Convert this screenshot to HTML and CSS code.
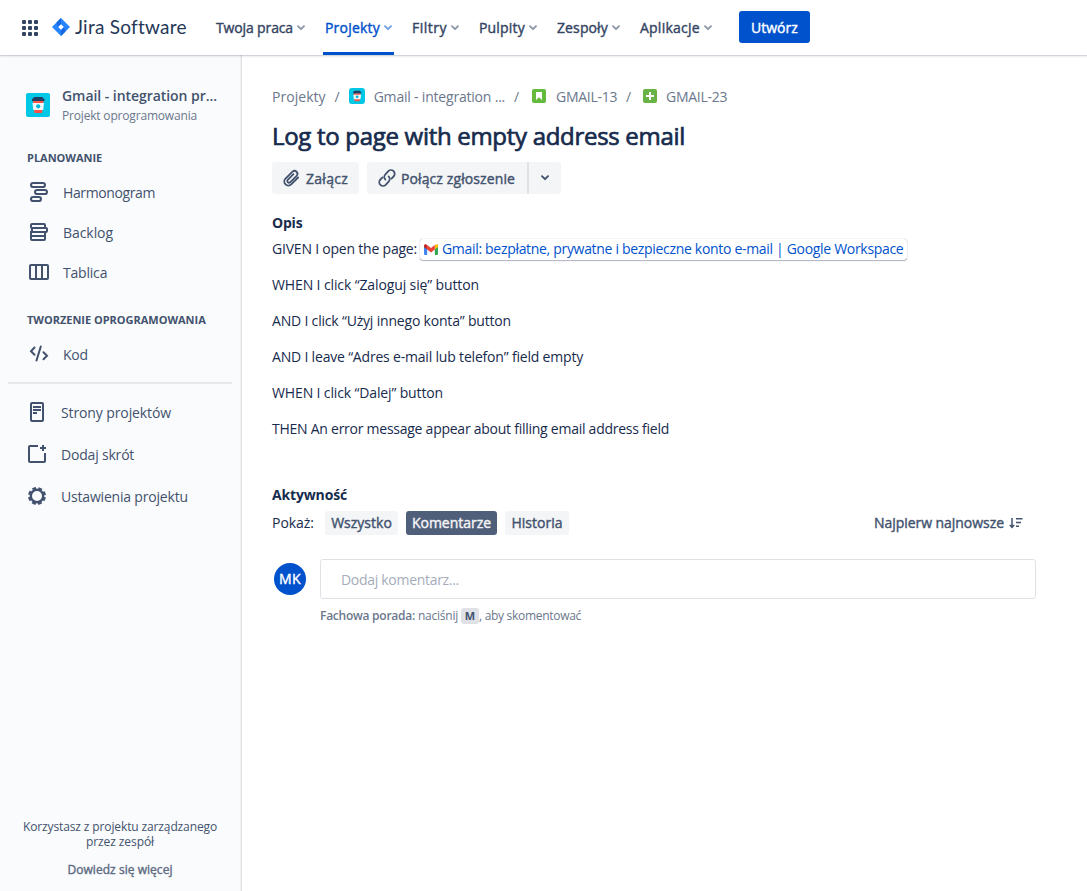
FILE: index.html
```
<!DOCTYPE html>
<html lang="pl">
<head>
<meta charset="utf-8">
<title>GMAIL-23 - Jira</title>
<link rel="stylesheet" href="styles.css">
</head>
<body>
<svg width="0" height="0" class="defs">
  <symbol id="chev" viewBox="0 0 8 6"><path d="M1 1.2 4 4.2 7 1.2" fill="none" stroke="currentColor" stroke-width="1.9" stroke-linecap="round" stroke-linejoin="round"/></symbol>
  <symbol id="cup" viewBox="0 0 24 24">
    <rect width="24" height="24" fill="#00c7e5"/>
    <path d="M7 8h10.500l-1.500 12H8.500z" fill="#ff5343"/>
    <path d="M6.500 10h11.500l-.8 7H7.300z" fill="#f4f7fa"/>
    <rect x="6" y="5.500" width="12.500" height="2.500" rx=".5" fill="#1d3f66"/>
    <rect x="7.500" y="4" width="9.500" height="2" rx=".8" fill="#1d3f66"/>
    <circle cx="12.200" cy="13.300" r="2.100" fill="#00b8d9"/>
  </symbol>
</svg>

<header class="top">
  <svg class="apps" width="16" height="16" viewBox="0 0 16 16" fill="#344563"><rect width="4" height="4" rx="1"/><rect x="6" width="4" height="4" rx="1"/><rect x="12" width="4" height="4" rx="1"/><rect y="6" width="4" height="4" rx="1"/><rect x="6" y="6" width="4" height="4" rx="1"/><rect x="12" y="6" width="4" height="4" rx="1"/><rect y="12" width="4" height="4" rx="1"/><rect x="6" y="12" width="4" height="4" rx="1"/><rect x="12" y="12" width="4" height="4" rx="1"/></svg>
  <a class="logo">
    <svg width="18" height="18" viewBox="0 0 18 18"><path d="M9 0 18 9 9 18 0 9z" fill="#2684ff"/><path d="M9 0v6L6 9 4.500 4.500z" fill="#1668e3"/><path d="M9 18v-6l3-3 1.500 4.500z" fill="#1668e3"/><path d="M9 6.200 11.800 9 9 11.800 6.200 9z" fill="#fff"/></svg>
    <span>Jira Software</span>
  </a>
  <nav class="menu">
    <a class="menu-item"><span class="ls-a">Twoja praca</span><svg class="chev"><use href="#chev"/></svg></a>
    <a class="menu-item active"><span class="ls-b">Projekty</span><svg class="chev"><use href="#chev"/></svg></a>
    <a class="menu-item"><span class="ls-c">Filtry</span><svg class="chev"><use href="#chev"/></svg></a>
    <a class="menu-item"><span class="ls-b">Pulpity</span><svg class="chev"><use href="#chev"/></svg></a>
    <a class="menu-item"><span class="ls-d">Zespoły</span><svg class="chev"><use href="#chev"/></svg></a>
    <a class="menu-item"><span class="ls-e">Aplikacje</span><svg class="chev"><use href="#chev"/></svg></a>
  </nav>
  <button class="create">Utwórz</button>
</header>

<div class="body">
  <aside class="side">
    <div class="project">
      <svg class="avatar" width="24" height="24"><use href="#cup"/></svg>
      <div><div class="pname">Gmail - integration pr...</div><div class="ptype">Projekt oprogramowania</div></div>
    </div>
    <h3 class="group">PLANOWANIE</h3>
    <a class="link"><svg width="24" height="24" viewBox="0 0 24 24"><g class="ln"><rect x="4" y="2.900" width="14" height="4.200" rx="2.100"/><rect x="8" y="9.900" width="12" height="4.200" rx="2.100"/><rect x="4" y="16.900" width="10" height="4.200" rx="2.100"/></g></svg><span class="ls-harm">Harmonogram</span></a>
    <a class="link"><svg width="24" height="24" viewBox="0 0 24 24"><g class="ln"><rect x="4" y="4" width="14" height="4" rx="1"/><rect x="4" y="12" width="14" height="4"/><rect x="4" y="16" width="14" height="4" rx="1"/></g><rect x="5" y="8" width="15" height="4" rx="1" class="ln fill-bg"/></svg><span class="ls-back">Backlog</span></a>
    <a class="link"><svg width="24" height="24" viewBox="0 0 24 24"><g class="ln"><rect x="3" y="5" width="18" height="14" rx="1"/><path d="M9 5v14M15 5v14"/></g></svg><span class="ls-tab">Tablica</span></a>
    <h3 class="group second">TWORZENIE OPROGRAMOWANIA</h3>
    <a class="link code"><svg width="24" height="24" viewBox="0 0 24 24"><g class="ln" stroke-linecap="round"><path d="M7.500 5.500 4 9.200 7.500 12.800M13.800 4.500 9.500 18.500M16.500 10.200 20 13.700 16.500 17.200"/></g></svg><span class="ls-tab">Kod</span></a>
    <hr>
    <a class="link low"><svg width="24" height="24" viewBox="0 0 24 24"><g class="ln"><rect x="6" y="3" width="12" height="18" rx="1"/><path d="M8 7h8M8 10h8M8 13h4" stroke-width="1.800"/></g></svg><span class="ls-f">Strony projektów</span></a>
    <a class="link low"><svg width="24" height="24" viewBox="0 0 24 24"><g class="ln"><path d="M13 4H5a1 1 0 0 0-1 1v14a1 1 0 0 0 1 1h14a1 1 0 0 0 1-1v-8"/><path d="M18 3v6M15 6h6"/></g></svg><span class="ls-g">Dodaj skrót</span></a>
    <a class="link low"><svg width="24" height="24" viewBox="0 0 24 24"><g class="ln"><circle cx="12" cy="12" r="6.200" stroke-width="2.400"/><circle cx="12" cy="12" r="7.800" stroke-width="2.400" stroke-dasharray="3.700 2.426" stroke-dashoffset="-1.213"/></g></svg><span class="ls-g">Ustawienia projektu</span></a>
    <footer class="note">
      <p><span class="ls-n">Korzystasz z projektu zarządzanego</span><br><span class="ls-n2">przez zespół</span></p>
      <a>Dowiedz się więcej</a>
    </footer>
  </aside>

  <main class="main">
    <div class="crumbs">
      <a class="ls-cr">Projekty</a><i>/</i>
      <svg class="mini" width="16" height="16"><use href="#cup"/></svg><a class="ls-tw">Gmail - integration ...</a><i>/</i>
      <svg class="kind" width="14" height="14"><rect width="14" height="14" rx="2" fill="#63ba3c"/><path d="M4 3h6v8L7 8.300 4 11z" fill="#fff"/></svg><a class="ls-key">GMAIL-13</a><i>/</i>
      <svg class="kind sub" width="14" height="14"><rect width="14" height="14" rx="2" fill="#68b346"/><path d="M7 3v8M3 7h8" stroke="#fff" stroke-width="2"/></svg><a class="ls-key">GMAIL-23</a>
    </div>
    <h1>Log to page with empty address email</h1>
    <div class="actions">
      <button class="btn attach"><svg width="20" height="20" viewBox="0 0 20 20"><path d="M16.600 9.300 9.700 16.200a4 4 0 0 1-5.700-5.700l7-7a2.900 2.900 0 0 1 4.100 4.100L8.600 14.100a1.700 1.700 0 0 1-2.400-2.400l5.700-5.700" transform="translate(.5 .2)" class="ic"/></svg><span class="ls-at">Załącz</span></button>
      <div class="split">
        <button class="btn join"><svg width="20" height="20" viewBox="0 0 20 20"><path class="ic" d="M8.400 11.600a3.700 3.700 0 0 1 0-5.200L11.300 3.200a3.700 3.700 0 0 1 5.300 5.300L14.500 10.600M11.600 8.400a3.700 3.700 0 0 1 0 5.200L8.700 16.800a3.700 3.700 0 0 1-5.300-5.300L5.500 9.400"/></svg><span class="ls-jn">Połącz zgłoszenie</span></button>
        <button class="btn more"><svg class="chev"><use href="#chev"/></svg></button>
      </div>
    </div>
    <h2>Opis</h2>
    <div class="desc">
      <p><span class="ls-p1">GIVEN I open the page:</span><a class="card"><svg width="14" height="11" viewBox="0 0 14 11"><path d="M0 1.500v8.500a1 1 0 0 0 1 1h2.200V4z" fill="#4285f4"/><path d="M14 1.500v8.500a1 1 0 0 1-1 1h-2.200V4z" fill="#34a853"/><path d="M10.800 1 14 0v3l-3.200 2.600z" fill="#fbbc04"/><path d="M3.200 1 7 4 10.800 1v4.600L7 8.500 3.200 5.600z" fill="#ea4335"/><path d="M0 2C0 .2 1.500-.3 3.200 1v4.600L0 3z" fill="#c5221f"/></svg><span>Gmail: bezpłatne, prywatne i bezpieczne konto e-mail | Google Workspace</span></a></p>
      <p class="ls-p2">WHEN I click “Zaloguj się” button</p>
      <p class="ls-p3">AND I click “Użyj innego konta” button</p>
      <p class="ls-p3">AND I leave “Adres e-mail lub telefon” field empty</p>
      <p class="ls-p4">WHEN I click “Dalej” button</p>
      <p class="ls-p5">THEN An error message appear about filling email address field</p>
    </div>
    <h2 class="activity">Aktywność</h2>
    <div class="filters">
      <span class="show">Pokaż:</span>
      <button class="tab t1">Wszystko</button><button class="tab t2 on">Komentarze</button><button class="tab t3">Historia</button>
      <a class="sort"><span>Najpierw najnowsze</span><svg width="14" height="12" viewBox="0 0 14 12"><path d="M3 1v9M.8 8 3 10.300 5.200 8" fill="none" stroke="currentColor" stroke-width="1.500"/><path d="M7 1.700h6.500M7 5.500h5M7 9.300h3" stroke="currentColor" stroke-width="1.600"/></svg></a>
    </div>
    <div class="comment">
      <div class="user">MK</div>
      <div class="entry">
        <div class="box">Dodaj komentarz...</div>
        <div class="tip"><b>Fachowa porada:</b><span class="press">naciśnij</span><kbd>M</kbd><span class="rest">, aby skomentować</span></div>
      </div>
    </div>
  </main>
</div>
</body>
</html>
```
FILE: styles.css
```
* { box-sizing: border-box; }
body { margin: 0; height: 891px; display: flex; flex-direction: column; overflow: hidden; font: 14px/20px "Open Sans", "Noto Sans", sans-serif; color: #172b4d; background: #fff; white-space: nowrap; }
.defs { position: absolute; }
h1, h2, h3, p { margin: 0; }
svg { flex: none; display: block; }
button { border: 0; margin: 0; padding: 0; font: inherit; color: inherit; }

/* medium weight */
.menu-item span, .create, .note a, .actions span, .tab, .sort span, .user { -webkit-text-stroke: .4px currentColor; }

.top { height: 55px; flex: none; display: flex; align-items: center; padding-left: 22px; position: relative; z-index: 1; box-shadow: 0 1px 1px rgba(9,30,66,.14), 0 2px 3px rgba(9,30,66,.06); background: #fff; }
.logo { display: flex; align-items: center; gap: 5px; width: 162px; margin-left: 14px; margin-top: -2px; font: 19px/24px Lato, sans-serif; letter-spacing: .25px; color: #253858; }
.menu { display: flex; gap: 16px; height: 55px; }
.menu-item { display: flex; align-items: center; gap: 4px; padding: 0 2px; color: #344563; border-bottom: 3px solid transparent; border-top: 3px solid transparent; }
.menu-item .chev { opacity: .55; }
.menu-item.active { color: #0052cc; border-bottom-color: #0052cc; }
.chev { width: 8px; height: 6px; }
.create { width: 71px; height: 32px; margin: -1px 0 0 25px; padding-top: 1px; border-radius: 3px; background: #0052cc; color: #fff; letter-spacing: .04px; }

.body { flex: 1; display: flex; min-height: 0; }
.side { width: 242px; display: flex; flex-direction: column; background: #fafbfc; border-right: 1px solid #dfe1e5; box-shadow: inset -1px 0 #f1f2f4; color: #42526e; }
.project { display: flex; gap: 12px; padding: 31px 0 0 26px; height: 93px; }
.avatar { border-radius: 2px; margin-top: 7px; }
.pname { font-weight: 600; letter-spacing: -.053px; line-height: 20px; }
.ptype { font-size: 12px; line-height: 20px; letter-spacing: -.18px; color: #6b778c; }
.group { font-size: 11px; line-height: 20px; font-weight: 700; padding-left: 27px; letter-spacing: -.02px; height: 25px; }
.second { margin-top: 17px; }
.link { display: flex; align-items: center; height: 40px; padding-left: 27px; gap: 12px; }
.link svg { margin-top: -2px; }
.code { height: 39px; }
hr { width: 224px; height: 2px; border: 0; background: #e6e8eb; margin: 8px 0 8px 8px; }
.low { height: 42px; padding-left: 25px; }
.ln { fill: none; stroke: #42526e; stroke-width: 2; }
.fill-bg { fill: #fafbfc; }
.note { margin: auto 0 14px; padding-right: 1px; text-align: center; font-size: 12px; line-height: 15px; }
.note a { display: block; margin-top: 13px; line-height: 15px; letter-spacing: .04px; color: #5e6c84; }

.main { flex: 1; padding: 32px 51px 0 30px; }
.crumbs { display: flex; align-items: center; height: 20px; color: #6b778c; }
.crumbs i { font-style: normal; width: 23px; text-align: center; }
.mini { border-radius: 3px; margin-right: 9px; margin-top: -2px; }
.kind { margin: -2px 10px 0 4px; }
.kind.sub { margin: -2px 9px 0 3px; }
h1 { margin-top: 13px; font-size: 24px; line-height: 32px; font-weight: 400; letter-spacing: -.301px; -webkit-text-stroke: .7px currentColor; }
.actions { display: flex; gap: 8px; margin-top: 10px; height: 32px; color: #42526e; }
.actions span { padding-top: 2px; }
.btn { height: 32px; background: #f4f5f7; display: flex; align-items: center; }
.attach { width: 87px; padding-left: 9px; gap: 5px; border-radius: 3px; }
.ic { fill: none; stroke: currentColor; stroke-width: 1.8; stroke-linecap: round; stroke-linejoin: round; }
.split { display: flex; border-radius: 3px; overflow: hidden; }
.join { width: 160px; padding-left: 10px; gap: 4px; }
.more { width: 34px; justify-content: center; border-left: 2px solid #dfe1e6; }
h2 { font-size: 14px; line-height: 20px; font-weight: 700; letter-spacing: -.2px; margin-top: 19px; }
.desc { display: flex; flex-direction: column; gap: 12px; margin-top: 4px; line-height: 24px; }
.desc p { height: 24px; display: flex; align-items: center; }
.card { display: flex; align-items: center; gap: 4px; width: 487px; height: 21px; margin-left: 3px; padding-left: 4px; border-radius: 3px; box-shadow: 0 0 1px rgba(9,30,66,.45), 0 1px 1px rgba(9,30,66,.3); color: #0052cc; letter-spacing: -.312px; }
h2.activity { margin-top: 44px; letter-spacing: -.15px; }
.filters { display: flex; align-items: center; gap: 8px; margin-top: 6px; height: 24px; }
.show { width: 45px; letter-spacing: -.036px; }
.tab { height: 24px; border-radius: 3px; background: #f4f5f7; color: #42526e; }
.on { background: #505f79; color: #f4f5f7; }
.t1 { width: 73px; }
.t2 { width: 91px; letter-spacing: -.032px; }
.t3 { width: 64px; }
.sort { display: flex; align-items: center; gap: 5px; margin: 0 13px 0 auto; color: #42526e; letter-spacing: -.049px; }
.comment { display: flex; gap: 14px; margin: 24px 0 0 2px; }
.user { width: 32px; height: 32px; margin-top: 4px; border-radius: 50%; background: #0052cc; color: #fff; line-height: 32px; text-align: center; letter-spacing: .3px; }
.entry { flex: 1; }
.box { height: 40px; border: 1px solid #dfe1e6; border-radius: 3px; padding-left: 20px; line-height: 40px; color: #a5adba; letter-spacing: -.298px; }
.tip { display: flex; align-items: center; height: 16px; margin-top: 9px; font-size: 12px; line-height: 16px; color: #6b778c; }
.tip b { font-weight: 600; letter-spacing: -.252px; margin-right: 3px; }
.press { letter-spacing: -.243px; }
.rest { letter-spacing: -.295px; }
kbd { width: 18px; height: 16px; margin-left: 3px; border-radius: 3px; background: #dfe1e6; color: #42526e; font: 700 11px/16px "Open Sans", sans-serif; text-align: center; }

/* label tracking */
.ls-a { letter-spacing: -.135px; }
.ls-b { letter-spacing: .2px; }
.ls-c { letter-spacing: .49px; }
.ls-d { letter-spacing: .131px; }
.ls-e { letter-spacing: .253px; }
.ls-harm { letter-spacing: -.389px; }
.ls-back { letter-spacing: -.063px; }
.ls-tab { letter-spacing: -.2px; }
.ls-f { letter-spacing: -.11px; }
.ls-g { letter-spacing: -.19px; }
.ls-n { letter-spacing: -.124px; }
.ls-n2 { letter-spacing: -.085px; }
.ls-cr { letter-spacing: .04px; }
.ls-tw { letter-spacing: -.2px; }
.ls-key { letter-spacing: -.294px; }
.ls-at { letter-spacing: .27px; }
.ls-jn { letter-spacing: .102px; }
.ls-p1 { letter-spacing: -.208px; }
.ls-p2 { letter-spacing: -.119px; }
.ls-p3 { letter-spacing: -.188px; }
.ls-p4 { letter-spacing: -.134px; }
.ls-p5 { letter-spacing: -.254px; }
```
